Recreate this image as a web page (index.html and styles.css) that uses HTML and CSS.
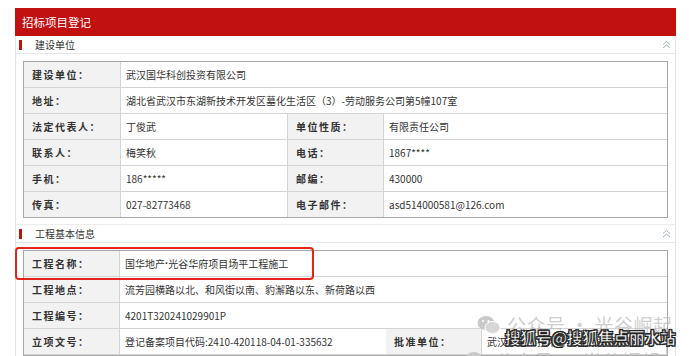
FILE: index.html
```html
<!DOCTYPE html>
<html lang="zh-CN">
<head>
<meta charset="utf-8">
<title>招标项目登记</title>
<link rel="stylesheet" href="styles.css">
</head>
<body>
<div class="panel">
  <div class="title">招标项目登记</div>
  <div class="frame">
    <div class="sec-head">
      <span class="bar"></span><span class="sec-name">建设单位</span>
      <svg class="chev" width="9" height="9" viewBox="0 0 9 9"><path d="M1 4.5 L4.5 1.5 L8 4.5 M1 8 L4.5 5 L8 8" fill="none" stroke="#9fb3bd" stroke-width="1"/></svg>
    </div>
    <div class="sec-body">
      <div class="grid g1">
        <div class="lab">建设单位：</div><div class="val span3">武汉国华科创投资有限公司</div>
        <div class="lab">地址：</div><div class="val span3">湖北省武汉市东湖新技术开发区墓化生活区（3）-劳动服务公司第5幢107室</div>
        <div class="lab">法定代表人：</div><div class="val">丁俊武</div><div class="lab">单位性质：</div><div class="val">有限责任公司</div>
        <div class="lab">联系人：</div><div class="val">梅笑秋</div><div class="lab">电话：</div><div class="val">1867****</div>
        <div class="lab">手机：</div><div class="val">186*****</div><div class="lab">邮编：</div><div class="val">430000</div>
        <div class="lab last">传真：</div><div class="val last">027-82773468</div><div class="lab last">电子邮件：</div><div class="val last">asd514000581@126.com</div>
      </div>
    </div>
    <div class="sec-head">
      <span class="bar"></span><span class="sec-name">工程基本信息</span>
      <svg class="chev" width="9" height="9" viewBox="0 0 9 9"><path d="M1 4.5 L4.5 1.5 L8 4.5 M1 8 L4.5 5 L8 8" fill="none" stroke="#9fb3bd" stroke-width="1"/></svg>
    </div>
    <div class="sec-body">
      <div class="grid g2">
        <div class="lab">工程名称：</div><div class="val span3">国华地产<span class="dot">·</span>光谷华府项目场平工程施工</div>
        <div class="lab">工程地点：</div><div class="val span3">流芳园横路以北、和风街以南、豹澥路以东、新荷路以西</div>
        <div class="lab">工程编号：</div><div class="val span3">4201T320241029901P</div>
        <div class="lab">立项文号：</div><div class="val">登记备案项目代码:2410-420118-04-01-335632</div><div class="lab">批准单位：</div><div class="val">武汉东湖新技术开发区政务服务局</div>
      </div>
    </div>
  </div>
</div>

<div class="highlight"></div>

<div class="wm wm1">
  <svg class="wx" width="24" height="20" viewBox="0 0 24 20"><ellipse cx="9" cy="8" rx="8.5" ry="7" fill="#c9c9c9"/><ellipse cx="15.5" cy="12.5" rx="7.5" ry="6" fill="#d6d6d6" stroke="#fff" stroke-width="1"/><circle cx="6" cy="6" r="1.1" fill="#fff"/><circle cx="11.5" cy="6" r="1.1" fill="#fff"/></svg>
  <span class="wm-text">公众号 · 光谷崛起</span>
</div>
<div class="sohu">搜狐号@搜狐焦点丽水站</div>
<div class="wm wm2">
  <svg class="wx" width="24" height="20" viewBox="0 0 24 20"><ellipse cx="9" cy="8" rx="8.5" ry="7" fill="#c9c9c9"/><ellipse cx="15.5" cy="12.5" rx="7.5" ry="6" fill="#d6d6d6" stroke="#fff" stroke-width="1"/></svg>
  <span class="wm-text">公众号 · 光谷崛起</span>
</div>
</body>
</html>
```

FILE: styles.css
```css
* { box-sizing: border-box; }
html, body { margin: 0; padding: 0; background: #fff; }
body {
  font-family: "Microsoft YaHei", "Noto Sans CJK SC", "Noto Sans", sans-serif;
  color: #333;
  overflow: hidden;
  height: 356px;
  position: relative;
}
.panel {
  margin: 8px 0 0 15px;
  width: 661px;
}
.title {
  height: 28px;
  background: #c0100f;
  color: #fff;
  font-size: 11.5px;
  line-height: 28px;
  padding-left: 7px;
}
.frame {
  border-left: 1px solid #e4e4e4;
  border-right: 1px solid #e4e4e4;
  height: 330px;
}
.sec-head {
  height: 18px;
  border-bottom: 1px solid #e6e6e6;
  display: flex;
  align-items: center;
}
.bar {
  width: 3px;
  height: 10px;
  background: #c0100f;
  margin-left: 3px;
}
.sec-name {
  font-size: 10px;
  margin-left: 13px;
  color: #333;
}
.chev {
  margin-left: auto;
  margin-right: 4px;
}
.sec-body {
  padding: 7px 7px 6px;
  border-bottom: 1px solid #ececec;
}
.grid {
  display: grid;
  border: 1px solid #a8a8a8;
  font-size: 10px;
}
.g1 { grid-template-columns: 97px 167px 96px 1fr; }
.g2 { grid-template-columns: 96px 266px 96px 1fr; }
.grid > div {
  height: 26px;
  border-bottom: 1px solid #d4d4d4;
  border-right: 1px solid #d4d4d4;
  display: flex;
  align-items: center;
  white-space: nowrap;
  overflow: hidden;
}
.grid > div.last { border-bottom: none; height: 25px; }
.grid > .span3 { border-right: none; }
.g1 > .val:nth-child(4n), .g2 > .val:nth-child(4n) { border-right: none; }
.span3 { grid-column: span 3; }
.lab {
  background: #f2f2f2;
  font-weight: bold;
  letter-spacing: 1.5px;
  padding-left: 8px;
  color: #333;
}
.val {
  padding-left: 5px;
  background: #fff;
}
.dot {
  font-family: "Liberation Sans", sans-serif;
  font-weight: bold;
}
.highlight {
  position: absolute;
  left: 15px;
  top: 247px;
  width: 299px;
  height: 33px;
  border: 2px solid #e5241e;
  border-radius: 4px;
}
.wm {
  position: absolute;
  display: flex;
  align-items: center;
  gap: 6px;
}
.wm1 { left: 477px; top: 311px; }
.wm2 { left: 465px; top: 347px; }
.wm-text {
  font-size: 19px;
  letter-spacing: 0.5px;
  color: rgba(185, 185, 185, 0.7);
  white-space: nowrap;
}
.sohu {
  position: absolute;
  left: 505px;
  top: 326px;
  font-size: 15.5px;
  font-weight: bold;
  color: #fff;
  white-space: nowrap;
  -webkit-text-stroke: 0.6px #222;
  text-shadow: 1px 1px 0 #222, -1px -1px 0 #222, 1px -1px 0 #222, -1px 1px 0 #222;
}
```
